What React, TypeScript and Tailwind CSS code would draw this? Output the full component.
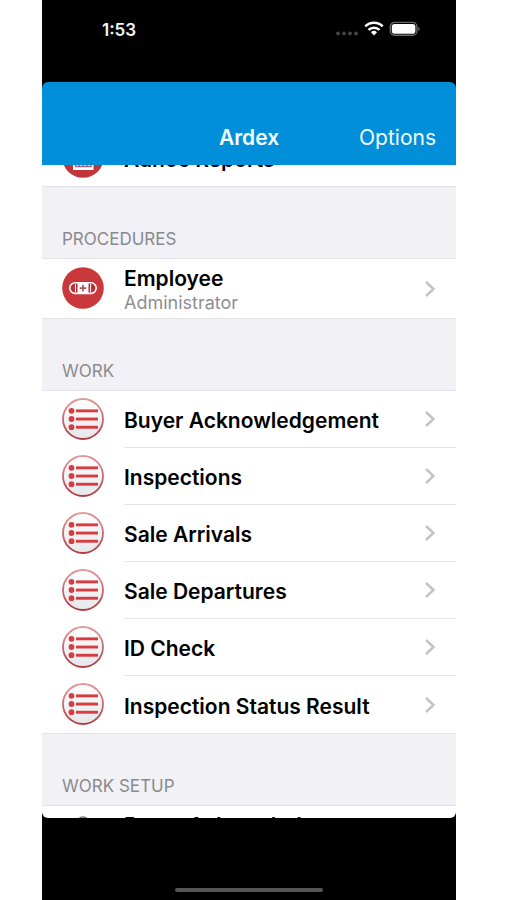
import type { ReactNode } from "react";

const workItems = [
  "Buyer Acknowledgement",
  "Inspections",
  "Sale Arrivals",
  "Sale Departures",
  "ID Check",
  "Inspection Status Result",
];

function Chevron() {
  return (
    <svg className="mr-5 h-4 w-3 shrink-0" viewBox="0 0 12 16" fill="none" stroke="#c2c2c5" strokeWidth="2.4" aria-hidden="true">
      <path d="M2 1l7.5 7L2 15" />
    </svg>
  );
}

function ListIcon() {
  return (
    <svg className="size-[42px]" viewBox="0 0 42 42" aria-hidden="true">
      <defs>
        <linearGradient id="ring" x1="0" y1="0" x2="0" y2="1">
          <stop offset="0" stopColor="#e39a9b" />
          <stop offset="1" stopColor="#b03a40" />
        </linearGradient>
        <linearGradient id="disc" x1="0" y1="0" x2="0" y2="1">
          <stop offset="0" stopColor="#ffffff" />
          <stop offset="1" stopColor="#e6e7ec" />
        </linearGradient>
      </defs>
      <circle cx="21" cy="21" r="20" fill="url(#disc)" stroke="url(#ring)" strokeWidth="1.8" />
      <g fill="#d83c3e">
        <circle cx="9.5" cy="12.8" r="2.9" />
        <circle cx="9.5" cy="21" r="2.9" />
        <circle cx="9.5" cy="29.2" r="2.9" />
        <rect x="14" y="11.4" width="22" height="2.9" />
        <rect x="14" y="19.6" width="22" height="2.9" />
        <rect x="14" y="27.8" width="22" height="2.9" />
      </g>
    </svg>
  );
}

function BandageIcon() {
  return (
    <svg className="size-[42px]" viewBox="0 0 42 42" aria-hidden="true">
      <circle cx="21" cy="21" r="20.8" fill="#c9383b" />
      <rect x="7.8" y="15.8" width="26.4" height="10.6" rx="5.3" fill="#b92c33" stroke="#fff" strokeWidth="1.6" />
      <rect x="15.5" y="15.8" width="11" height="10.6" fill="#fff" />
      <path d="M21 17.8v6.6M17.7 21.1h6.6" stroke="#a8505c" strokeWidth="1.6" />
      <path d="M13.4 17v8M28.6 17v8" stroke="#fff" strokeWidth="1" />
    </svg>
  );
}

function ReportIcon() {
  return (
    <svg className="size-[42px]" viewBox="0 0 42 42" aria-hidden="true">
      <circle cx="21" cy="21" r="20.8" fill="#c0353a" />
      <rect x="11" y="12" width="20.5" height="22" fill="#fff" />
      <path d="M13.5 16v14.5H29V16M17.3 23v7M21.2 20v10M25 23v7" fill="none" stroke="#a8607c" strokeWidth="1.5" />
    </svg>
  );
}

function PersonIcon() {
  return (
    <svg className="size-[42px]" viewBox="0 0 42 42" fill="none" stroke="#77777b" strokeWidth="1.6" aria-hidden="true">
      <circle cx="21" cy="9" r="6" />
      <path d="M9 34c0-9 5-14 12-14s12 5 12 14z" />
    </svg>
  );
}

function SectionHeader({ children }: { children: ReactNode }) {
  return (
    <h2 className="flex h-[73px] items-end border-y border-[#e3e3e6] bg-[#f1f1f6] px-5 pb-[7px] text-[17px] leading-6 font-normal text-[#8a8a8e]">
      {children}
    </h2>
  );
}

function Row({ icon, title, detail }: { icon: ReactNode; title: string; detail?: string }) {
  return (
    <li className="group">
      <button type="button" className="flex w-full items-center pl-5 text-left">
        <span className="shrink-0 pb-0.5">{icon}</span>
        <span className={`ml-5 flex min-w-0 flex-1 items-center justify-between border-b border-[#e5e5e7] group-last:border-b-0 ${detail ? "h-[59px]" : "h-[57px]"}`}>
          <span className="flex flex-col pt-1">
            <span className="whitespace-nowrap text-[21px] leading-6 font-semibold text-black">{title}</span>
            {detail && <span className="text-[18px] leading-6 text-[#8e8e92]">{detail}</span>}
          </span>
          <Chevron />
        </span>
      </button>
    </li>
  );
}

export default function App() {
  return (
    <div className="h-screen bg-white pr-[51px] pl-[42px] font-['Inter','Liberation_Sans',sans-serif]">
      <div className="flex h-full flex-col bg-black">
        <div className="flex h-[82px] shrink-0 items-start justify-between pt-5 pr-9 pl-[60px] text-[#f5f5f5]">
          <span className="text-[17px] leading-5 font-semibold">1:53</span>
          <svg className="h-5 w-[86px]" viewBox="0 0 86 20" aria-label="Wi-Fi connected, battery full" role="img">
            <g fill="#454545">
              <circle cx="4" cy="13.5" r="1.9" />
              <circle cx="10" cy="13.5" r="1.9" />
              <circle cx="16" cy="13.5" r="1.9" />
              <circle cx="22" cy="13.5" r="1.9" />
            </g>
            <g fill="none" stroke="#fff" strokeWidth="2.5">
              <path d="M31.3 6.3a12.3 12.3 0 0 1 17.4 0" />
              <path d="M34.5 9.9a7.8 7.8 0 0 1 11 0" />
            </g>
            <path d="M37 12.3a4.3 4.3 0 0 1 6 0l-3 3.2z" fill="#fff" />
            <rect x="56.3" y="2.4" width="26.6" height="12.8" rx="4.2" fill="none" stroke="#6a6a6a" strokeWidth="1.4" />
            <rect x="57.8" y="3.9" width="23.6" height="9.8" rx="2.8" fill="#fff" />
            <path d="M84.2 7v4q1.5-.7 1.5-2t-1.5-2z" fill="#6a6a6a" />
          </svg>
        </div>
        <header className="z-10 grid h-[83px] shrink-0 grid-cols-[1fr_auto_1fr] items-end rounded-t-md bg-[#008fd8] px-5 pb-[13px] text-[21px] leading-7 text-[#f2fbff]">
          <h1 className="col-start-2 font-semibold">Ardex</h1>
          <button type="button" className="justify-self-end">Options</button>
        </header>
        <main className="min-h-0 flex-1 overflow-hidden rounded-b-md bg-white">
          <ul className="-mt-9">
            <Row icon={<ReportIcon />} title="Adhoc Reports" />
          </ul>
          <SectionHeader>PROCEDURES</SectionHeader>
          <ul>
            <Row icon={<BandageIcon />} title="Employee" detail="Administrator" />
          </ul>
          <SectionHeader>WORK</SectionHeader>
          <ul>
            {workItems.map((item) => (
              <Row key={item} icon={<ListIcon />} title={item} />
            ))}
          </ul>
          <SectionHeader>WORK SETUP</SectionHeader>
          <ul>
            <Row icon={<PersonIcon />} title="Buyer Acknowledgement" detail="Administrator" />
          </ul>
        </main>
        <footer className="flex h-[82px] shrink-0 items-end justify-center pb-2">
          <div className="h-1 w-[148px] rounded-full bg-[#565656]" />
        </footer>
      </div>
    </div>
  );
}
